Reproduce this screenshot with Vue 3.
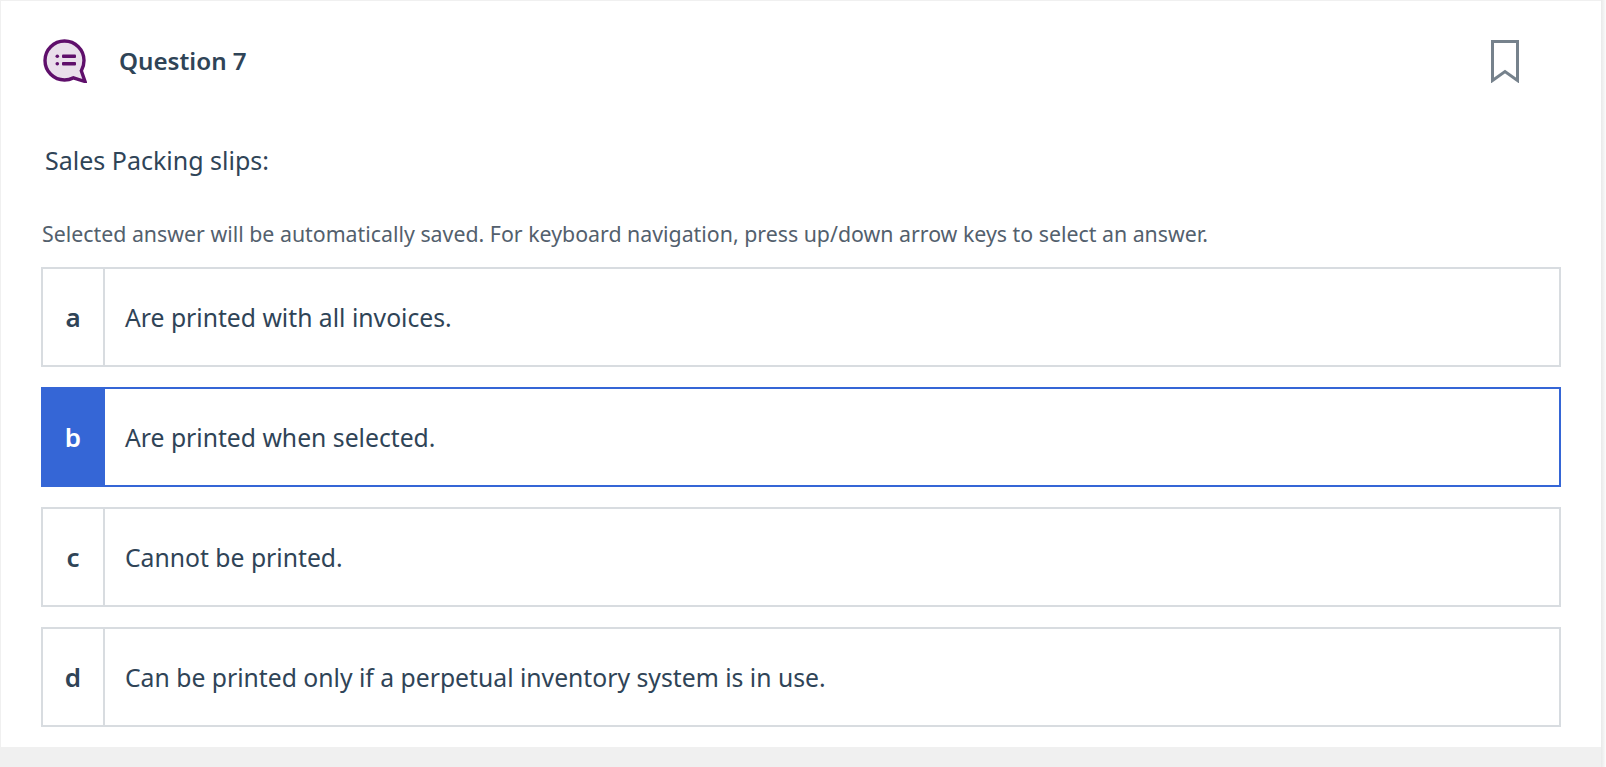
<script setup>
const options = [
  { key: 'a', text: 'Are printed with all invoices.' },
  { key: 'b', text: 'Are printed when selected.', selected: true },
  { key: 'c', text: 'Cannot be printed.' },
  { key: 'd', text: 'Can be printed only if a perpetual inventory system is in use.' },
]
</script>

<template>
  <div class="page">
    <div class="main">
      <section class="card">
        <header class="head">
          <svg class="chat" viewBox="0 0 44 44" aria-hidden="true">
            <path d="M21.500 2C10.700 2 2 10.700 2 21.500S10.700 41 21.500 41c3.200 0 6.200-.8 8.900-2.100L42 42.500 38.300 31.800C40 28.900 41 25.300 41 21.500 41 10.700 32.300 2 21.500 2Z" fill="#e9dfeb" stroke="#5f0f6b" stroke-width="3.400" stroke-linejoin="miter"/>
            <rect x="12.500" y="15.500" width="3.600" height="3.600" rx="1.800" fill="#5f0f6b"/>
            <rect x="12.500" y="23" width="3.600" height="3.600" rx="1.800" fill="#5f0f6b"/>
            <rect x="19" y="15.500" width="14" height="3.600" rx="1" fill="#5f0f6b"/>
            <rect x="19" y="23" width="14" height="3.600" rx="1" fill="#5f0f6b"/>
          </svg>
          <h2 class="title">Question 7</h2>
          <svg class="mark" viewBox="0 0 28 43" aria-hidden="true">
            <path d="M1.500 1.500H26.500V40.500L14 31.500 1.500 40.500Z" fill="none" stroke="#76828c" stroke-width="3"/>
          </svg>
        </header>
        <p class="question">Sales Packing slips:</p>
        <p class="hint">Selected answer will be automatically saved. For keyboard navigation, press up/down arrow keys to select an answer.</p>
        <ul class="options">
          <li v-for="o in options" :key="o.key" class="option" :class="{ selected: o.selected }">
            <span class="letter">{{ o.key }}</span>
            <span class="answer">{{ o.text }}</span>
          </li>
        </ul>
      </section>
    </div>
    <div class="edge"></div>
  </div>
</template>

<style>
html, body { margin: 0; background: #fff; }
</style>

<style scoped>
.page {
  display: flex;
  width: 1606px;
  height: 767px;
  overflow: hidden;
  font-family: "Noto Sans", "Open Sans", sans-serif;
  color: #2f4457;
}
.main {
  box-sizing: border-box;
  width: 1601px;
  flex: none;
  padding: 1px 0 0 1px;
  background: #f0f0f0;
}
.edge {
  flex: 1;
  background: linear-gradient(to right, #e9e9e9, #f3f3f3 60%, #fcfcfc);
}
.card {
  box-sizing: border-box;
  height: 746px;
  padding: 38px 40px 0 40px;
  background: #fff;
}
.head { display: flex; align-items: center; height: 44px; padding-left: 2px; }
.chat { width: 44px; height: 44px; flex: none; }
.title { margin: 0 0 0 32px; flex: 1; font-size: 24.200px; font-weight: 600; line-height: 44px; }
.mark { width: 28px; height: 43px; margin-right: 42px; flex: none; }
.question { margin: 60px 0 0 4px; font-size: 25px; line-height: 34px; }
.hint { margin: 43px 0 0 1px; font-size: 21.340px; line-height: 28px; color: #53606d; }
.options { list-style: none; margin: 19px 0 0; padding: 0; display: flex; flex-direction: column; gap: 20px; }
.option { box-sizing: border-box; height: 100px; display: flex; border: 2px solid #d8dce0; }
.letter { width: 60px; flex: none; border-right: 2px solid #d8dce0; display: flex; align-items: center; justify-content: center; font-size: 26px; font-weight: 600; }
.answer { flex: 1; padding-left: 20px; display: flex; align-items: center; font-size: 24.720px; }
.option.selected { border-color: #3566d6; }
.option.selected .letter { background: #3566d6; border-right-color: #3566d6; color: #fff; }
</style>
